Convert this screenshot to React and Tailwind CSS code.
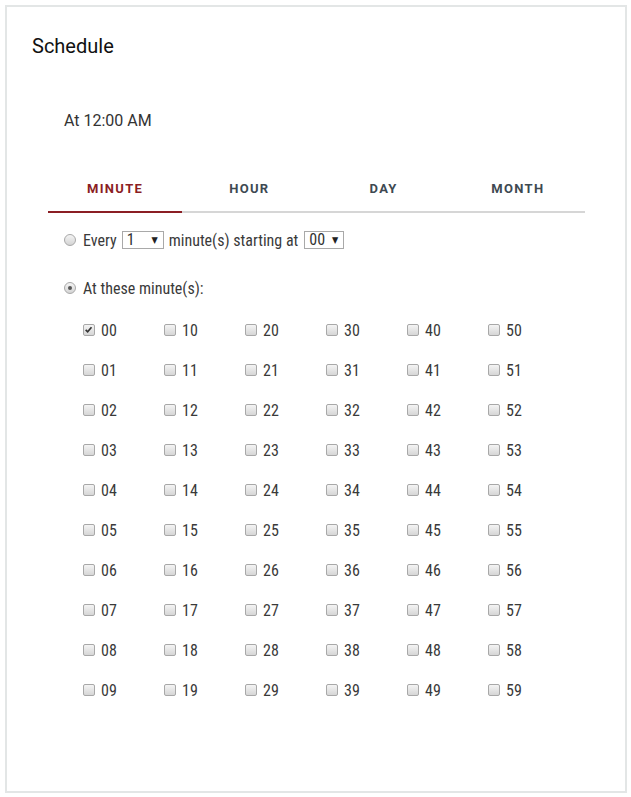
import React from "react";

const cond = { fontFamily: "'Liberation Sans Narrow', 'Roboto Condensed', 'DejaVu Sans Condensed', sans-serif" };

function Box({ checked }) {
  return (
    <span className="relative inline-block w-[12px] h-[12px] rounded-[2px] border border-[#a8a8a8] bg-gradient-to-b from-[#f4f4f4] to-[#d6d6d6] shrink-0">
      {checked && (
        <svg viewBox="0 0 12 12" className="absolute left-[0px] top-[0px] w-[10px] h-[10px]">
          <path d="M2 5.8 L4.4 8.2 L9 2.8" fill="none" stroke="#333" strokeWidth="2" />
        </svg>
      )}
    </span>
  );
}

function Radio({ checked }) {
  return (
    <span className="relative inline-flex items-center justify-center w-[12px] h-[12px] rounded-full border border-[#a8a8a8] bg-gradient-to-b from-[#f4f4f4] to-[#d4d4d4] shrink-0">
      {checked && <span className="w-[4px] h-[4px] rounded-full bg-[#555]" />}
    </span>
  );
}

function Select({ value, w }) {
  return (
    <span className={`inline-flex items-center justify-between h-[18px] border border-[#a9a9a9] bg-white pl-[4px] pr-[5px] ${w}`}>
      <span className="text-[16px] leading-none text-[#333]">{value}</span>
      <span className="text-[9px] leading-none text-[#222]">▼</span>
    </span>
  );
}

export default function App() {
  const tabs = ["MINUTE", "HOUR", "DAY", "MONTH"];
  const rows = Array.from({ length: 10 }, (_, r) => r);
  const cols = Array.from({ length: 6 }, (_, c) => c);
  return (
    <div className="bg-white w-[631px] h-[797px] pt-[5px] pl-[5px]">
      <div className="w-[622px] h-[788px] border-2 border-[#e3e6e6] bg-white" style={{ fontFamily: "Roboto, sans-serif" }}>
        <div className="pt-[24px] pl-[25px] h-[54px] text-[20px] leading-[30px] text-[#111]">Schedule</div>
        <div className="mt-[48px] ml-[57px] text-[16px] leading-[24px] text-[#333]">At 12:00 AM</div>
        <div className="mt-[33px] ml-[41px] w-[537px] flex border-b-2 border-[#d6d6d6]">
          {tabs.map((t, i) => (
            <div key={t} className="relative flex-1 h-[45px] flex items-center justify-center">
              <span className={`text-[13px] font-bold tracking-[1.3px] ${i === 0 ? "text-[#8b1e24]" : "text-[#3e4952]"}`}>{t}</span>
              {i === 0 && <span className="absolute left-0 right-0 bottom-[-2px] h-[2px] bg-[#8b1e24]" />}
            </div>
          ))}
        </div>
        <div style={cond} className="text-[16px] text-[#3a3a3a]">
          <div className="mt-[15px] ml-[57px] h-[24px] flex items-center">
            <Radio />
            <span className="ml-[7px] pt-[1px]">Every</span>
            <span className="ml-[5px]"><Select value="1" w="w-[42px]" /></span>
            <span className="ml-[5px] pt-[1px]">minute(s) starting at</span>
            <span className="ml-[6px]"><Select value="00" w="w-[40px]" /></span>
          </div>
          <div className="mt-[24px] ml-[57px] h-[24px] flex items-center">
            <Radio checked />
            <span className="ml-[7px] pt-[1px]">At these minute(s):</span>
          </div>
          <div className="mt-[10px] ml-[76px]">
            {rows.map((r) => (
              <div key={r} className="flex h-[40px] items-center">
                {cols.map((c) => {
                  const n = c * 10 + r;
                  return (
                    <div key={c} className="w-[81px] flex items-center">
                      <Box checked={n === 0} />
                      <span className="ml-[6px] pt-[1px]">{String(n).padStart(2, "0")}</span>
                    </div>
                  );
                })}
              </div>
            ))}
          </div>
        </div>
      </div>
    </div>
  );
}
